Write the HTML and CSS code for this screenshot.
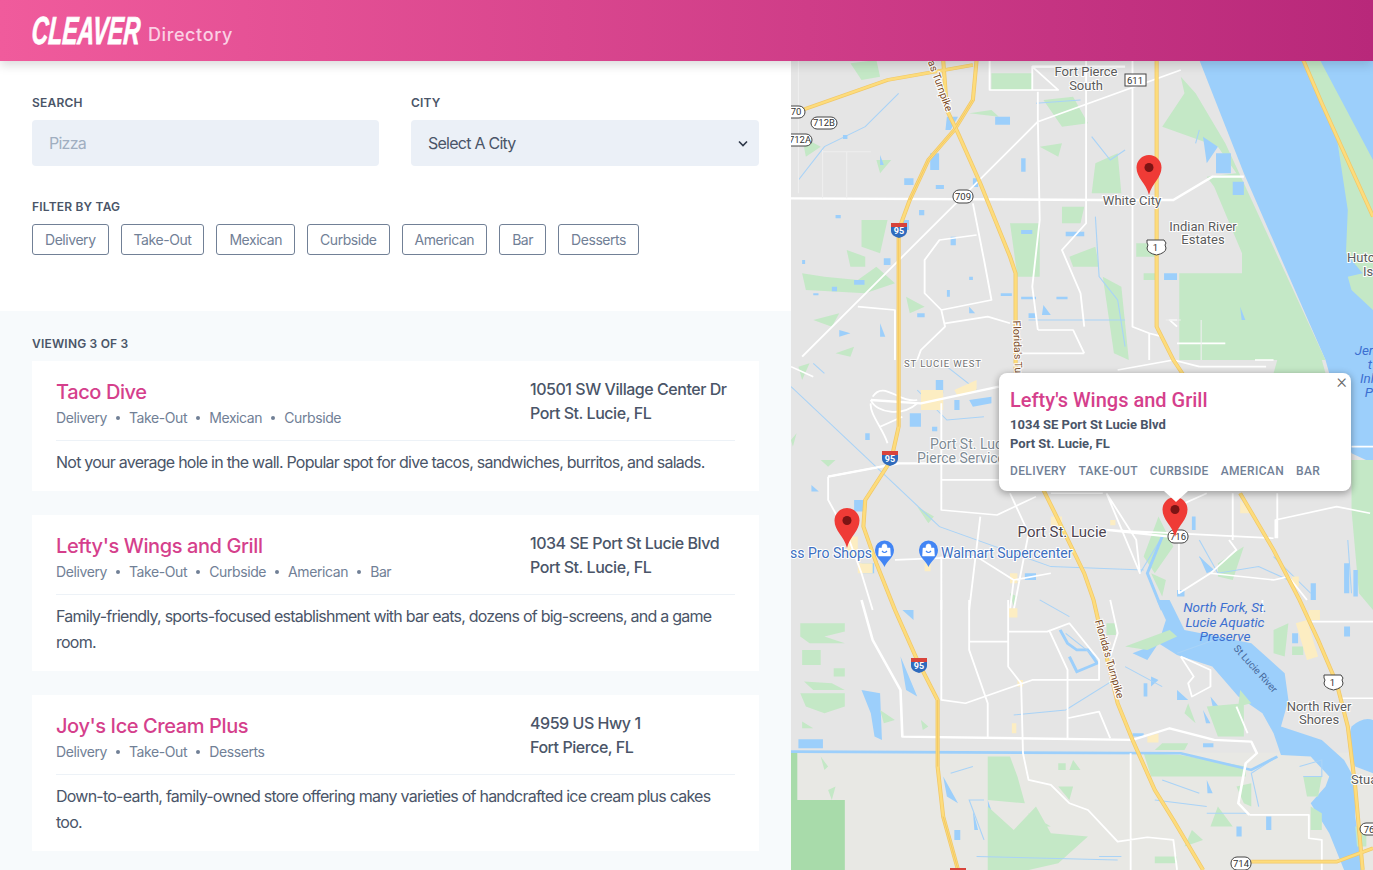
FILE: index.html
```html
<!DOCTYPE html>
<html lang="en">
<head>
    <meta charset="UTF-8">
    <meta name="viewport" content="width=device-width, initial-scale=1.0">
    <title>Cleaver Directory</title>
    <link rel="stylesheet" href="styles.css">
</head>
<body>
    <header class="topbar">
        <span class="logo-box"><span class="logo">CLEAVER</span></span>
        <span class="topbar-sub">Directory</span>
    </header>

    <main class="layout">
        <section class="left-panel">
            <div class="filters">
                <div class="filter-row">
                    <div class="field">
                        <label class="field-label" for="search">Search</label>
                        <input class="field-input" id="search" type="text" placeholder="Pizza">
                    </div>
                    <div class="field">
                        <label class="field-label" for="city">City</label>
                        <div class="select-wrap">
                            <select class="field-input field-select" id="city">
                                <option>Select A City</option>
                            </select>
                            <svg class="select-arrow" width="10" height="7" viewBox="0 0 10 7"><path d="M1 1.5l4 4 4-4" fill="none" stroke="#2d3748" stroke-width="1.6"/></svg>
                        </div>
                    </div>
                </div>
                <div class="field-label tag-label">Filter by tag</div>
                <div class="tag-row">
                    <button class="tag-btn">Delivery</button>
                    <button class="tag-btn">Take-Out</button>
                    <button class="tag-btn">Mexican</button>
                    <button class="tag-btn">Curbside</button>
                    <button class="tag-btn">American</button>
                    <button class="tag-btn">Bar</button>
                    <button class="tag-btn">Desserts</button>
                </div>
            </div>

            <div class="results">
                <div class="field-label results-count">Viewing 3 of 3</div>

                <article class="card">
                    <div class="card-top">
                        <div class="card-main">
                            <h2 class="card-title">Taco Dive</h2>
                            <div class="card-tags"><span>Delivery</span><i></i><span>Take-Out</span><i></i><span>Mexican</span><i></i><span>Curbside</span></div>
                        </div>
                        <div class="card-address">10501 SW Village Center Dr<br>Port St. Lucie, FL</div>
                    </div>
                    <p class="card-desc">Not your average hole in the wall. Popular spot for dive tacos, sandwiches, burritos, and salads.</p>
                </article>

                <article class="card">
                    <div class="card-top">
                        <div class="card-main">
                            <h2 class="card-title">Lefty's Wings and Grill</h2>
                            <div class="card-tags"><span>Delivery</span><i></i><span>Take-Out</span><i></i><span>Curbside</span><i></i><span>American</span><i></i><span>Bar</span></div>
                        </div>
                        <div class="card-address">1034 SE Port St Lucie Blvd<br>Port St. Lucie, FL</div>
                    </div>
                    <p class="card-desc">Family-friendly, sports-focused establishment with bar eats, dozens of big-screens, and a game room.</p>
                </article>

                <article class="card">
                    <div class="card-top">
                        <div class="card-main">
                            <h2 class="card-title">Joy's Ice Cream Plus</h2>
                            <div class="card-tags"><span>Delivery</span><i></i><span>Take-Out</span><i></i><span>Desserts</span></div>
                        </div>
                        <div class="card-address">4959 US Hwy 1<br>Fort Pierce, FL</div>
                    </div>
                    <p class="card-desc">Down-to-earth, family-owned store offering many varieties of handcrafted ice cream plus cakes too.</p>
                </article>
            </div>
        </section>

        <section class="map">
            <svg class="map-svg" viewBox="791 61 582 809" width="582" height="809">
                <defs>
                    <path id="turnpike" d="M410 0L420 150L450 220L510 370L590 590L605 640L605 1000M680 1290L720 1380L790 1540L815 1620L850 1790L880 1930L920 2040L980 2190L1030 2280L1110 2430"/>
                    <path id="i95" d="M500 0L490 120L440 210L370 300L320 420L290 510L290 1100L270 1200L200 1320L195 1400L230 1510L280 1650L340 1800L395 1920L395 2120L410 2270L450 2430"/>
                    <path id="sr70" d="M30 150L260 60L490 15"/>
                    <path id="us1" d="M985 0L985 800L1030 900L1060 950M1210 1300L1300 1470L1370 1620L1420 1740L1470 1870L1500 2000L1520 2180L1540 2430"/>
                    <path id="sr714" d="M1240 2405L1470 2405L1568 2365"/>
                    <path id="island" d="M1380 0L1430 130L1568 470"/>
                </defs>

                <g transform="translate(791,60) scale(.3712,.3333)">
                    <!-- land tone south of the canal -->
                    <rect class="land-south" x="0" y="2078" width="1568" height="360"/>
                    <path class="park" d="M0 2078H17V2220H145V2430H0Z"/>

                    <!-- north part of the map -->
                    <g>
                        <path class="water" d="M1100 0H1568V1210L1510 1180L1440 900L1220 340Z"/>
                        <path class="green" d="M1380 0L1425 0L1568 300V750L1510 690L1500 650L1540 640L1495 580L1500 450L1470 230Z"/>
                        <path class="green" d="M1050 50L1090 100L1170 250L1220 370L1440 900H1046V640H1215V580L1140 380L1120 350L1200 340L1150 260L1100 240L1000 200L1060 100Z"/>
                        <path class="green" d="M160 10L230 0L240 50L190 60ZM540 40H650V90H540ZM680 120L760 110L800 190L730 200ZM820 310L880 280L890 400L810 400ZM730 440H790L780 490H730ZM590 490H670V650H610ZM670 260L730 250L720 290ZM30 640L90 650L180 660L230 620L280 670L200 700L40 690ZM190 480L260 480L240 580L190 560ZM150 570L200 590L200 620L160 620ZM310 710L360 740L320 760ZM230 300L270 300L240 340ZM480 160L540 150L560 170ZM750 590L820 560L830 620L760 620ZM840 650L890 680L910 900L870 880ZM930 550H985V590H930ZM950 640H985V660H950ZM60 780L130 760L110 800ZM30 230L80 260L40 290ZM120 880L170 860L160 890Z"/>
                        <path class="stream" d="M20 360L90 260L200 200L290 100M660 130L780 120M810 230L860 300L900 270M820 470L830 650L880 720L900 860M640 780L900 780M1100 210L1090 250"/>
                        <path class="water" d="M550 170h40v24h-40zM420 170h30l-20 40h-14zM375 280h24v50h-24zM305 355h25v20h-25zM390 375h22v12h-22zM490 355h14v26h-14zM620 295h12v40h-12zM620 510h30v12h-30zM240 285l10 30h-10zM140 225h12v12h-12zM120 465h14v10h-14zM345 450h14v16h-14zM250 595h18v20h-18zM430 530h14v26h-14zM300 480h18v30h-18zM1110 230L1150 260L1120 310ZM1145 280h40v60h-40zM1190 365h30v40h-30zM1005 640h35v20h-35zM740 515h50v14h-50zM170 660h28v14h-28zM110 680h14v14h-14zM60 700h14v6h-14zM565 700h30v8h-30zM620 710h40v8h-40zM715 710h30v8h-30zM340 760h20v12h-20zM240 790l14 40h-14zM130 810l30 10l-30 10zM480 650h10v10h-10zM420 690h8v20h-8zM480 740l16 20h-16zM30 600h8v12h-8zM680 735l20 30h-24zM640 760h20v14h-20zM1210 740l14 40h-10z"/>
                        <path class="road thin" d="M1050 30L665 185L30 890M0 0M920 0V800L965 820L965 900M965 820L1000 830M535 0V90H720L650 20H800M650 20V90M795 0V490L730 570L780 700L790 800M665 95V180L670 480L650 680L665 810M665 810H760L790 880M490 430L520 600L540 720L405 750L360 700L360 600L400 540L500 525M405 750L415 800L350 870L340 900M415 790L530 770L590 790M180 740L280 750L280 900M1040 850H1170M1040 800L1020 780L1040 780M620 880L790 880"/>
                        <path class="road" d="M0 415L840 420L1030 420L1135 350L1220 350M650 20H900"/>
                        <path class="faint" d="M20 0V400M85 270V415M150 275V415M85 275H215M1010 780H1050M1105 780V900"/>
                    </g>

                    <!-- middle part of the map -->
                    <g transform="translate(0,900)">
                        <path class="green" d="M1310 0H1430L1440 40H1300ZM1510 300L1568 300V750L1530 700L1510 450ZM950 590L990 470L1030 560L980 640ZM1150 610L1220 560L1190 660L1150 650ZM340 440L385 470L370 490ZM80 300L120 300L100 320ZM970 640L1010 660L1000 710ZM590 700L610 710L600 740ZM0 240L15 220L5 260ZM20 20L50 10L30 60Z"/>
                        <path class="stream" d="M0 80L400 500L700 620L950 630M90 40L60 10M340 90L420 180L520 170M420 20L500 90M1000 530L940 640M1100 540L1150 640L1260 620L1340 660M1100 590L1130 630M1300 590L1400 700M1500 540L1510 700"/>
                        <path class="water-line" d="M1000 530L960 640L1000 750"/>
                        <path class="water" d="M170 420h30v35h-30zM480 120l60-10v20l-50 10zM320 160h30v40h-30zM390 60h20v40h-20zM190 610h34v30h-34zM55 375l20 20h-20zM440 120h14v30h-14zM1100 590l40 40l-20 10zM1400 670h14v50h-14zM1490 610h14v90h-14zM1515 630h12v80h-12zM1040 690h20v20h-20zM1080 470h10v40h-10zM630 640h30v20h-30zM380 200h14v14h-14zM200 220h12v20h-12z"/>
                        <path class="urban" d="M350 90h60v60h-60zM440 90l60-30v30l-50 20zM700 470h30v30h-30zM860 480h14v16h-14zM150 530h30v60h-30zM180 610h40v30h-40zM360 610h16v24h-16zM590 640h20v30h-20zM1210 420l30 40h-30zM1350 650h18v30h-18z"/>
                        <path class="road thin" d="M0 20L60 50M215 120C230 160 300 170 340 130M220 110C250 60 290 130 340 120M405 130V450L555 465L660 410M405 360H560M100 350L290 310M100 350V420L150 520L190 640L220 750M510 470L480 750M405 590V750M590 400L640 520L600 750M700 400L840 400M850 400L930 540L940 640L850 400M850 510L1300 535M1045 540V700L1130 640L1200 570L1180 540M1130 640L1300 660L1340 650L1390 720M1190 400L1190 540M1305 535V480L1470 440L1560 460M1310 400V535M1120 400L1060 430M280 600L500 590L600 660L700 640M600 660L590 750M1300 0H1250M1510 260H1568"/>
                        <path class="road" d="M215 120L350 130L560 80M100 350L290 310H560M850 510L1020 530"/>
                        <path class="road thin" d="M215 130C210 160 250 210 260 250M880 30L1030 0L1100 20M1100 20H1280M240 200L300 170"/>
                    </g>

                    <!-- south part of the map -->
                    <g transform="translate(0,1620)">
                        <path class="water" d="M985 0L1020 0L1060 90L1240 130L1330 220L1340 300L1320 380L1430 420L1490 480L1520 540V650L1540 810H1490L1450 700L1400 610L1440 560L1450 530L1400 470L1320 465L1300 400L1270 340L1205 290L1135 200L1040 165L990 130L1010 60ZM1510 380Q1540 350 1568 360V520L1520 500Q1490 440 1510 380ZM190 270L240 280L245 420L225 410L215 340ZM295 170L340 290L310 270ZM300 30L330 30L330 60ZM20 418H86V445H20ZM410 530L450 610L420 590ZM920 160L990 130L960 180ZM1110 430h28v12h-28zM1130 290l30 40l-20 10zM1110 330l20 40h-12zM1040 270l30 30h-30zM920 400h30v10h-30zM1350 100h16v30h-16zM1490 80h16v30h-16zM1120 540l16 40h-14zM440 690h16v30h-16zM530 600l28 90h-24zM630 700h10v30h-10zM490 630l14 60h-10zM1200 680h14v30h-14zM1490 620h14v50h-14zM1280 650h14v40h-14zM970 230l20 10l-20 20zM950 250h10v40h-10z"/>
                        <path class="water-line" d="M725 90L745 130L770 150L800 150L825 190L770 215L750 170"/>
                        <path class="green" d="M25 70H145V95L90 110L145 130H50L25 110ZM30 150h50v45H30zM115 205h30v25h-30zM35 245L110 250L145 270H60ZM25 280H145V320L90 340L40 320ZM30 365l30 20h-30zM240 330l40 30l-30 10zM350 360l20 20l-15 10zM850 70h25v35h-25zM1000 430H1070L1060 450H980ZM950 460L1050 465L1225 500V530H970ZM1070 310L1090 370L1060 340ZM1120 320L1220 310L1220 410L1150 410ZM1210 270L1240 310L1205 320ZM1300 90L1340 70L1330 170L1300 160ZM1350 140h30v25h-30zM530 470L590 470L610 530L630 610L530 600ZM530 620L600 690L660 620L700 700L800 710L720 790L640 810H530ZM640 640L700 680L640 680ZM720 560L760 560L750 600ZM760 480L780 510H750ZM720 490h20v20h-20zM100 570l20-10l-10 40zM80 470l20 30l-10 10zM980 770H1040V790H980ZM1080 690L1110 720L1060 740ZM1150 620L1190 680L1130 680ZM1200 560L1240 550V620L1220 610ZM1380 530H1430L1420 590L1390 590ZM1400 620L1430 640V690H1400ZM1520 680H1550V740H1525ZM900 140L1020 90L1040 110L960 150Z"/>
                        <path class="stream" d="M670 0L750 50M740 100L830 180M600 345L740 330L870 240M900 200L1000 260M1040 160L1140 120M520 600H480L520 720M490 500L430 520M980 600L1120 620M1120 640H1230M1000 540L1100 580M1310 470L1240 520L1260 620M1370 500L1430 480V530H1380M500 770L880 780M830 770H890"/>
                        <path class="water-line" d="M0 455L1050 460L1240 510L1310 470"/>
                        <path class="urban" d="M585 25h25v28h-25zM960 410l30-10v28h-30zM1360 70l30-10l30 110l-30 10zM1395 30h30v30h-30zM610 240h15v20h-15zM595 370h12v30h-12z"/>
                        <path class="road thin" d="M405 0V300L470 310L650 240H830V180L750 70L690 95H585M480 0V150L530 310V415M480 125H585M585 0V200L620 250L625 460L640 540L700 555L750 610L800 630L880 725L960 712L1030 720L1040 810M695 90L745 210V415M745 355L830 335L860 415M860 0L880 100L860 170M1235 645H1395V715L1430 720V810M1400 65H1568M1475 295H1568M1050 170L1130 210L1130 260L1080 290L1070 250L1085 230L1050 170M915 460V810M1200 320L1230 400M1270 0V40"/>
                        <path class="road" d="M190 0L220 120L295 270L300 410L920 420L1020 385L1140 420L1240 425L1255 460L1225 490L1205 610L1235 645"/>
                    </g>

                    <!-- highways on top -->
                    <g class="hw-edge">
                        <use href="#turnpike"/><use href="#i95"/><use href="#sr70"/><use href="#us1"/><use href="#sr714"/><use href="#island"/>
                    </g>
                    <g class="hw-fill">
                        <use href="#turnpike"/><use href="#i95"/><use href="#sr70"/><use href="#us1"/><use href="#sr714"/><use href="#island"/>
                    </g>
                    <path class="hw-split" d="M290 510V1100M395 1920V2120M410 2270L450 2430M490 120L440 210L370 300L320 420"/>
                </g>

                <!-- labels -->
                <g class="lbl">
                    <text x="1086" y="76">Fort Pierce</text>
                    <text x="1086" y="90">South</text>
                    <text x="1132" y="205">White City</text>
                    <text x="1203" y="231">Indian River</text>
                    <text x="1203" y="244">Estates</text>
                    <text x="1319" y="711">North River</text>
                    <text x="1319" y="724">Shores</text>
                    <text class="lbl-start" x="1347" y="262">Hutc</text>
                    <text class="lbl-start" x="1363" y="276">Is</text>
                    <text class="lbl-start" x="1351" y="784">Stua</text>
                    <text class="lbl-gray lbl-start" x="930" y="449">Port St. Lucie</text>
                    <text class="lbl-gray lbl-start" x="917" y="463">Pierce Service</text>
                    <text class="lbl-city" x="1062" y="537">Port St. Lucie</text>
                    <text class="lbl-area" x="943" y="367">ST LUCIE WEST</text>
                    <text class="lbl-poi lbl-end" x="872" y="558">Bass Pro Shops</text>
                    <text class="lbl-poi lbl-start" x="941" y="558">Walmart Supercenter</text>
                </g>
                <g class="lbl-water">
                    <text x="1225" y="612">North Fork, St.</text>
                    <text x="1225" y="627">Lucie Aquatic</text>
                    <text x="1225" y="641">Preserve</text>
                    <text x="1364" y="355">Jer</text>
                    <text x="1370" y="369">t</text>
                    <text x="1367" y="383">Inl</text>
                    <text x="1369" y="397">P</text>
                    <text class="lbl-river" transform="translate(1253,671) rotate(48)">St Lucie River</text>
                </g>
                <g class="lbl-road">
                    <text transform="translate(937,87) rotate(70)">as Turnpike</text>
                    <text transform="translate(1014,347) rotate(88)">Florida's Tu</text>
                    <text transform="translate(1106,660) rotate(74)">Florida's Turnpike</text>
                </g>

                <!-- road shields -->
                <g class="shield">
                    <rect x="785" y="106" width="20" height="12" rx="6"/><text x="796" y="115">70</text>
                    <rect x="811" y="117" width="26" height="12" rx="6"/><text x="824" y="126">712B</text>
                    <rect x="785" y="134" width="27" height="12" rx="6"/><text x="800" y="143">712A</text>
                    <rect x="953" y="190" width="20" height="13" rx="6"/><text x="963" y="200">709</text>
                    <rect class="shield-sq" x="1125" y="74" width="21" height="12"/><text x="1135" y="84">611</text>
                    <path d="M1147 240h17l2 3l-1 2l1 3q0 5-9.500 7q-9.500-2-9.500-7l1-3l-1-2z"/><text x="1155.500" y="251">1</text>
                    <path d="M1324 675h17l2 3l-1 2l1 3q0 5-9.500 7q-9.500-2-9.500-7l1-3l-1-2z"/><text x="1332.500" y="686">1</text>
                    <rect x="1168" y="530" width="20" height="13" rx="6"/><text x="1178" y="540">716</text>
                    <rect x="1360" y="823" width="20" height="12" rx="6"/><text x="1369" y="833">76</text>
                    <rect x="1231" y="857" width="20" height="13" rx="6"/><text x="1241" y="867">714</text>
                </g>
                <g class="interstate">
                    <g transform="translate(899,230)"><path class="i-red" d="M-8 -7H8V-3H-8Z"/><path class="i-blue" d="M-8 -3H8V1Q8 6 0 8Q-8 6 -8 1Z"/><text y="3.500">95</text></g>
                    <g transform="translate(890,458)"><path class="i-red" d="M-8 -7H8V-3H-8Z"/><path class="i-blue" d="M-8 -3H8V1Q8 6 0 8Q-8 6 -8 1Z"/><text y="3.500">95</text></g>
                    <g transform="translate(919,665)"><path class="i-red" d="M-8 -7H8V-3H-8Z"/><path class="i-blue" d="M-8 -3H8V1Q8 6 0 8Q-8 6 -8 1Z"/><text y="3.500">95</text></g>
                    <g transform="translate(958,875)"><path class="i-red" d="M-8 -7H8V-3H-8Z"/><path class="i-blue" d="M-8 -3H8V1Q8 6 0 8Q-8 6 -8 1Z"/></g>
                </g>

                <!-- shop markers -->
                <g transform="translate(884.500,567)">
                    <path class="shop-pin" d="M0 0C-2 -6 -9.500 -9 -9.500 -17A9.500 9.500 0 1 1 9.500 -17C9.500 -9 2 -6 0 0Z"/>
                    <path class="shop-bag" d="M-5.500 -19H5.500L6 -11H-6ZM-2.500 -19V-20.500A2.500 2.500 0 0 1 2.500 -20.500V-19"/>
                    <path class="shop-smile" d="M-2.500 -16Q0 -13 2.500 -16"/>
                </g>
                <g transform="translate(928.500,567)">
                    <path class="shop-pin" d="M0 0C-2 -6 -9.500 -9 -9.500 -17A9.500 9.500 0 1 1 9.500 -17C9.500 -9 2 -6 0 0Z"/>
                    <path class="shop-bag" d="M-5.500 -19H5.500L6 -11H-6ZM-2.500 -19V-20.500A2.500 2.500 0 0 1 2.500 -20.500V-19"/>
                    <path class="shop-smile" d="M-2.500 -16Q0 -13 2.500 -16"/>
                </g>

                <!-- result pins -->
                <g transform="translate(1149,195)"><path class="pin" d="M0 0C-3 -12 -12.500 -17 -12.500 -27.500A12.500 12.500 0 1 1 12.500 -27.500C12.500 -17 3 -12 0 0Z"/><circle class="pin-dot" cy="-27.500" r="4.500"/></g>
                <g transform="translate(847,548)"><path class="pin" d="M0 0C-3 -12 -12.500 -17 -12.500 -27.500A12.500 12.500 0 1 1 12.500 -27.500C12.500 -17 3 -12 0 0Z"/><circle class="pin-dot" cy="-27.500" r="4.500"/></g>
                <g transform="translate(1175,537)"><path class="pin" d="M0 0C-3 -12 -12.500 -17 -12.500 -27.500A12.500 12.500 0 1 1 12.500 -27.500C12.500 -17 3 -12 0 0Z"/><circle class="pin-dot" cy="-27.500" r="4.500"/></g>
            </svg>

            <div class="popup">
                <span class="popup-close">&times;</span>
                <div class="popup-title">Lefty's Wings and Grill</div>
                <div class="popup-address">1034 SE Port St Lucie Blvd<br>Port St. Lucie, FL</div>
                <div class="popup-tags"><span>Delivery</span><span>Take-Out</span><span>Curbside</span><span>American</span><span>Bar</span></div>
            </div>
        </section>
    </main>
</body>
</html>
```

FILE: styles.css
```css
* {
    box-sizing: border-box;
}

html,
body {
    height: 100%;
}

body {
    margin: 0;
    font-family: Inter, "Liberation Sans", sans-serif;
    color: #4a5568;
    background-color: #fff;
    overflow: hidden;
}

/* top bar */
.topbar {
    position: relative;
    z-index: 2;
    display: flex;
    align-items: center;
    height: 61px;
    padding: 0 32px;
    background: linear-gradient(to right, #f05b9c, #b8287a);
    box-shadow: 0 4px 10px rgba(0, 0, 0, 0.15);
}

.logo-box {
    display: block;
    width: 116px;
}

.logo {
    display: block;
    font-family: "Liberation Sans", sans-serif;
    font-size: 39px;
    font-weight: 700;
    font-style: italic;
    line-height: 1;
    color: #fff;
    -webkit-text-stroke: 0.8px #fff;
    transform: skewX(-4deg) scaleX(0.59);
    transform-origin: left center;
    white-space: nowrap;
}

.topbar-sub {
    margin-top: 8px;
    font-size: 18px;
    font-weight: 500;
    letter-spacing: 0.6px;
    color: #fbd0e4;
}

/* page layout */
.layout {
    display: flex;
    height: 809px;
}

.left-panel {
    width: 791px;
    flex-shrink: 0;
    overflow: hidden;
}

.filters {
    height: 250px;
    padding: 35px 32px 0;
}

.filter-row {
    display: grid;
    grid-template-columns: 347px 348px;
    gap: 32px;
}

.field-label {
    display: block;
    font-size: 12px;
    font-weight: 600;
    line-height: 14px;
    letter-spacing: 0.2px;
    text-transform: uppercase;
    color: #4a5568;
}

.field-input {
    display: block;
    width: 100%;
    height: 46px;
    margin-top: 10px;
    padding: 0 17px;
    border: 0;
    border-radius: 4px;
    font-family: inherit;
    font-size: 16px;
    letter-spacing: -0.75px;
    color: #4a5568;
    background-color: #ebf0f7;
}

.field-input::placeholder {
    color: #a0aec0;
}

.select-wrap {
    position: relative;
}

.field-select {
    appearance: none;
}

.select-arrow {
    position: absolute;
    right: 11px;
    top: 20px;
}

.tag-label {
    margin-top: 34px;
}

.tag-row {
    display: flex;
    gap: 12px;
    margin-top: 10px;
}

.tag-btn {
    height: 31px;
    padding: 0 12px;
    border: 1px solid #718096;
    border-radius: 3px;
    font-family: inherit;
    font-size: 14px;
    letter-spacing: -0.45px;
    color: #718096;
    background-color: #fff;
}

/* results list */
.results {
    min-height: 559px;
    padding: 26px 32px 0;
    background-color: #f7fafc;
}

.results-count {
    margin-bottom: 10px;
}

.card {
    margin-bottom: 24px;
    padding: 16px 24px;
    background-color: #fff;
}

.card-top {
    display: flex;
    height: 64px;
    border-bottom: 1px solid #edf2f7;
}

.card-main {
    width: 474px;
}

.card-title {
    margin: 0;
    font-size: 20px;
    font-weight: 500;
    line-height: 30px;
    letter-spacing: -0.4px;
    color: #d53f8c;
}

.card-tags {
    display: flex;
    align-items: center;
    gap: 8px;
    margin-top: 1px;
    font-size: 14px;
    line-height: 20px;
    letter-spacing: -0.4px;
    color: #718096;
}

.card-tags i {
    width: 4px;
    height: 4px;
    margin: 0 1px;
    border-radius: 50%;
    background-color: #718096;
}

.card-address {
    font-size: 16px;
    font-weight: 500;
    line-height: 24px;
    letter-spacing: -0.46px;
    white-space: nowrap;
    color: #4a5568;
}

.card-desc {
    margin: 8px 0 0;
    font-size: 16px;
    line-height: 26px;
    letter-spacing: -0.76px;
    color: #4a5568;
}

/* map */
.map {
    position: relative;
    flex: 1;
    overflow: hidden;
    background-color: #e5e5e5;
}

.map-svg {
    display: block;
}

.land-south { fill: #e8e8e4; }
.park { fill: #a8dbaa; }
.water { fill: #9ccffb; }
.green { fill: #c4e8c6; }
.urban { fill: #fcedc2; }
.stream { fill: none; stroke: #a9d3f7; stroke-width: 3; }
.water-line { fill: none; stroke: #9ccffb; stroke-width: 8; }
.road { fill: none; stroke: #fff; stroke-width: 7; stroke-linejoin: round; }
.road.thin { stroke-width: 5; }
.faint { fill: none; stroke: #eee; stroke-width: 3; }
.hw-edge use { fill: none; stroke: #f1c868; stroke-width: 11; }
.hw-fill use { fill: none; stroke: #fddc7c; stroke-width: 7; }
.hw-split { fill: none; stroke: #eebf5a; stroke-width: 2; }

.lbl text,
.lbl-water text {
    font-family: Roboto, sans-serif;
    font-size: 13px;
    text-anchor: middle;
    paint-order: stroke;
    stroke: #fff;
    stroke-width: 2px;
    fill: #5b5b5b;
}

.lbl .lbl-start { text-anchor: start; }
.lbl .lbl-end { text-anchor: end; }
.lbl .lbl-gray { font-size: 14px; fill: #7d8a94; }
.lbl .lbl-city { font-size: 15px; fill: #4c4450; }
.lbl .lbl-area { font-size: 9.500px; letter-spacing: 0.9px; fill: #6f6f6f; }
.lbl .lbl-poi { font-size: 14px; fill: #3d6fc0; }

.lbl-water text {
    font-size: 13.500px;
    font-style: italic;
    fill: #3c6fd1;
    stroke: none;
}

.lbl-water .lbl-river {
    font-size: 10px;
    font-style: normal;
    fill: #46689c;
}

.lbl-road text {
    font-family: Roboto, sans-serif;
    font-size: 10.500px;
    text-anchor: middle;
    paint-order: stroke;
    stroke: #fff;
    stroke-width: 2px;
    fill: #7a4a1e;
}

.shield rect,
.shield path {
    fill: #fff;
    stroke: #444;
    stroke-width: 1;
}

.shield text {
    font-family: Roboto, sans-serif;
    font-size: 9.500px;
    text-anchor: middle;
    fill: #333;
}

.interstate .i-red { fill: #d8433b; }
.interstate .i-blue { fill: #2f6bbd; }

.interstate text {
    font-family: Roboto, sans-serif;
    font-size: 9px;
    font-weight: 700;
    text-anchor: middle;
    fill: #fff;
}

.shop-pin { fill: #4285f4; }
.shop-bag { fill: #fff; stroke: #fff; stroke-width: 0.5; }
.shop-smile { fill: none; stroke: #4285f4; stroke-width: 1.2; }
.pin { fill: #ef3b36; }
.pin-dot { fill: #7b1414; }

/* popup over the map */
.popup {
    position: absolute;
    left: 208px;
    top: 312px;
    width: 352px;
    height: 118px;
    padding: 13px 11px 0;
    border-radius: 8px;
    font-family: Roboto, sans-serif;
    background-color: #fff;
    box-shadow: 0 2px 7px 1px rgba(0, 0, 0, 0.3);
}

.popup::after {
    content: "";
    position: absolute;
    left: 165px;
    bottom: -11px;
    border-top: 11px solid #fff;
    border-left: 12px solid transparent;
    border-right: 12px solid transparent;
}

.popup-close {
    position: absolute;
    right: 4px;
    top: 0;
    font-size: 20px;
    font-weight: 300;
    line-height: 16px;
    color: #666;
}

.popup-title {
    font-size: 20px;
    font-weight: 500;
    line-height: 28px;
    color: #d53f8c;
}

.popup-address {
    margin-top: 1px;
    font-size: 13px;
    font-weight: 700;
    line-height: 19px;
    color: #4a5568;
}

.popup-tags {
    display: flex;
    gap: 12px;
    margin-top: 9px;
    font-size: 12px;
    font-weight: 500;
    line-height: 18px;
    letter-spacing: 0.35px;
    text-transform: uppercase;
    color: #718096;
}
```
